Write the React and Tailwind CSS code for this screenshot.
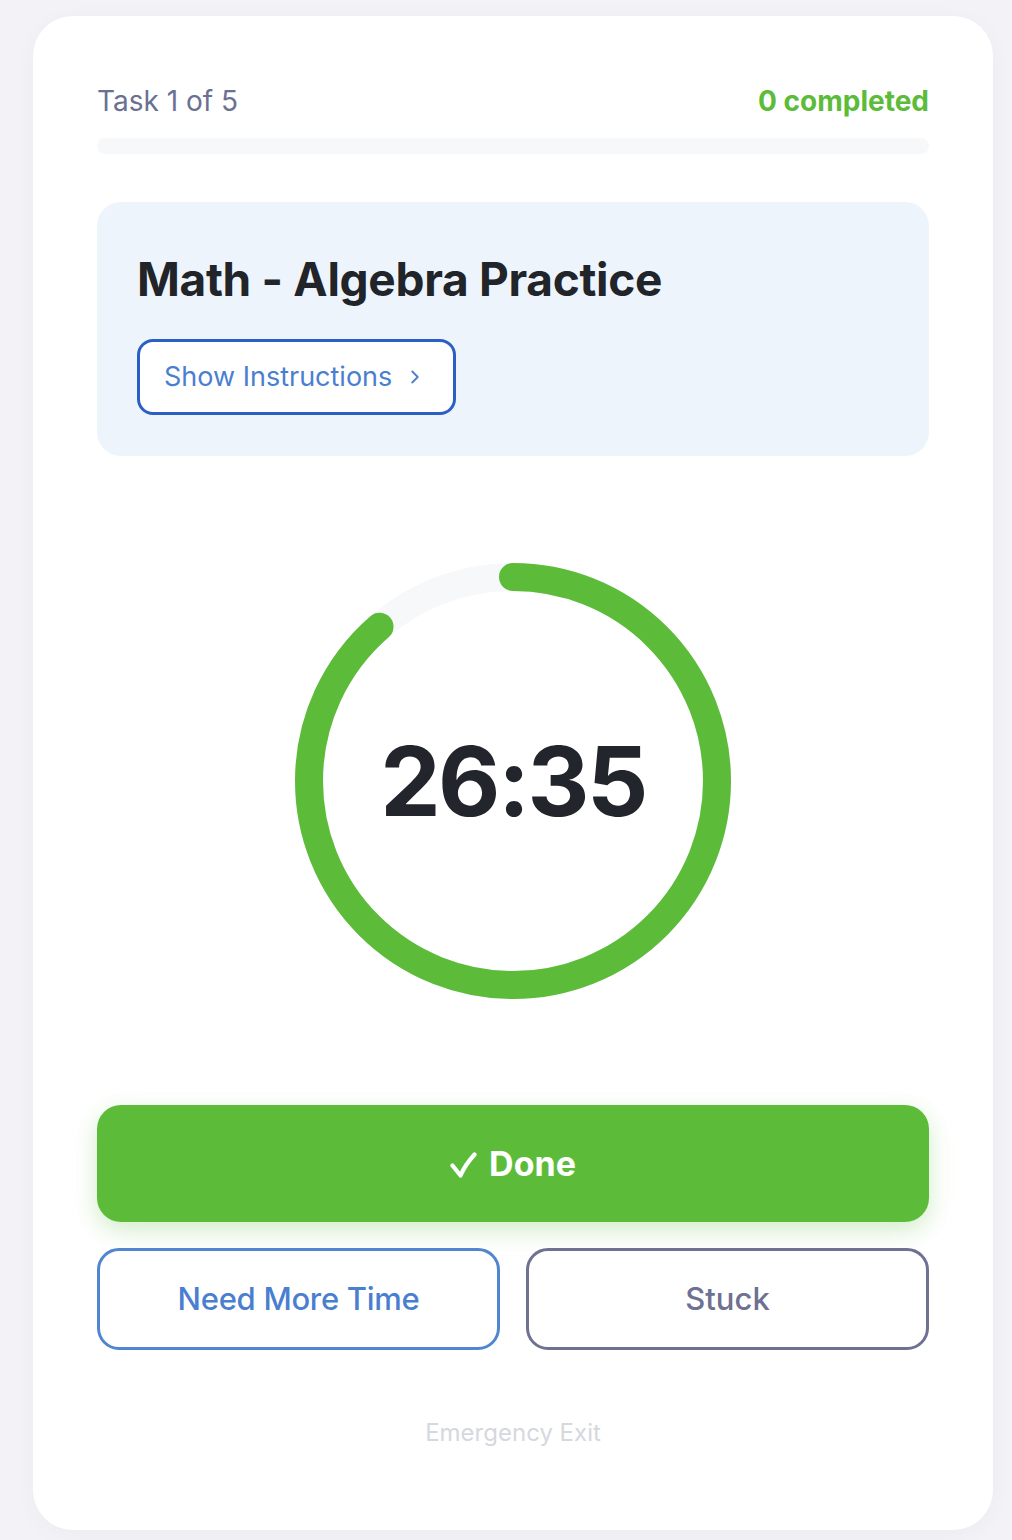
import React from "react";
import { ChevronRight } from "lucide-react";

export default function App() {
  const size = 436;
  const stroke = 28;
  const r = (size - stroke) / 2;
  const c = 2 * Math.PI * r;
  const progress = (26 * 60 + 35) / (30 * 60);
  return (
    <div
      className="min-h-[1540px] w-full bg-[#f3f3f7] pl-[33px] pr-[19px] pt-[16px] pb-[10px]"
      style={{ fontFamily: "Inter, 'Noto Sans', 'DejaVu Sans', sans-serif" }}
    >
      <div className="flex h-[1514px] flex-col rounded-[40px] bg-white px-[64px] pt-[64px] shadow-[0_4px_24px_rgba(0,0,0,0.03)]">
        <div className="flex items-center justify-between text-[28px] leading-[42px]">
          <span className="text-[#6b7093]">Task 1 of 5</span>
          <span className="font-bold text-[#5cbc3a]">0 completed</span>
        </div>
        <div className="mt-[16px] h-[16px] w-full rounded-full bg-[#f7f8fa]" />

        <div className="mt-[48px] flex flex-col items-start rounded-[24px] bg-[#edf4fc] px-[40px] pt-[44px] pb-[41px]">
          <h1 className="text-[46px] font-bold leading-[66px] tracking-[-0.3px] text-[#212429]">
            Math - Algebra Practice
          </h1>
          <button className="mt-[27px] flex h-[76px] items-center gap-[12px] rounded-[16px] border-[3px] border-[#2b5fc4] bg-white pl-[24px] pr-[27px] text-[27px] text-[#4a7fd0]">
            Show Instructions
            <ChevronRight size={22} strokeWidth={2} />
          </button>
        </div>

        <div className="flex justify-center pt-[107px] pb-[106px]">
          <div className="relative h-[436px] w-[436px]">
            <svg width={size} height={size} className="-rotate-90">
              <circle cx={size / 2} cy={size / 2} r={r} fill="none" stroke="#f7f8fa" strokeWidth={stroke} />
              <circle
                cx={size / 2}
                cy={size / 2}
                r={r}
                fill="none"
                stroke="#5cbc3a"
                strokeWidth={stroke}
                strokeLinecap="round"
                strokeDasharray={`${c * progress} ${c}`}
              />
            </svg>
            <div className="absolute inset-0 flex items-center justify-center">
              <span className="text-[96px] font-bold leading-none tracking-[-2.5px] text-[#22252b]">26:35</span>
            </div>
          </div>
        </div>

        <button className="flex h-[117px] w-full items-center justify-center gap-[12px] rounded-[24px] bg-[#5cbc3a] text-[34px] font-bold text-white shadow-[0_8px_24px_rgba(92,188,58,0.28)]">
          <svg width="27" height="26" viewBox="0 0 27 26" className="mt-[2px]">
            <path
              d="M2.5 13.5 L10.5 23.5 Q15 13 24.5 2.5"
              fill="none"
              stroke="white"
              strokeWidth="4.2"
              strokeLinecap="round"
              strokeLinejoin="round"
            />
          </svg>
          <span>Done</span>
        </button>

        <div className="mt-[26px] grid grid-cols-2 gap-[26px]">
          <button className="flex h-[102px] items-center justify-center rounded-[22px] border-[3px] border-[#5086d0] bg-white text-[31px] font-medium tracking-[-0.3px] text-[#4a7fd0]">
            Need More Time
          </button>
          <button className="flex h-[102px] items-center justify-center rounded-[22px] border-[3px] border-[#6e7191] bg-white text-[31px] font-medium text-[#6e7191]">
            Stuck
          </button>
        </div>

        <div className="mt-[66px] text-center text-[24px] leading-[34px] text-[#d5d8de]">Emergency Exit</div>
      </div>
    </div>
  );
}
